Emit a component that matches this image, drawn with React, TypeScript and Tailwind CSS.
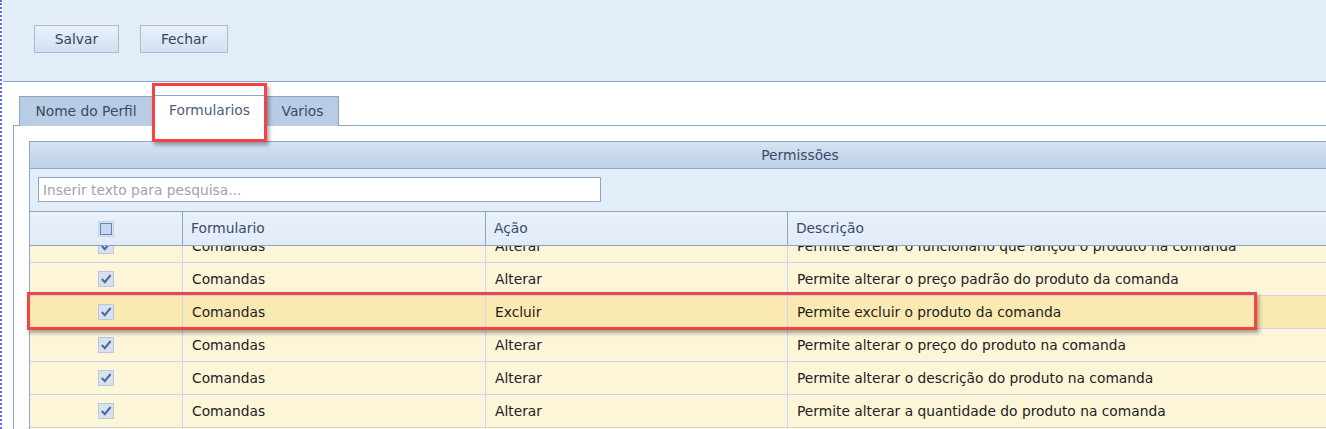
import React from 'react';

const rows = [
  { form: 'Comandas', acao: 'Alterar', desc: 'Permite alterar o funcionario que lançou o produto na comanda' },
  { form: 'Comandas', acao: 'Alterar', desc: 'Permite alterar o preço padrão do produto da comanda' },
  { form: 'Comandas', acao: 'Excluir', desc: 'Permite excluir o produto da comanda', selected: true },
  { form: 'Comandas', acao: 'Alterar', desc: 'Permite alterar o preço do produto na comanda' },
  { form: 'Comandas', acao: 'Alterar', desc: 'Permite alterar o descrição do produto na comanda' },
  { form: 'Comandas', acao: 'Alterar', desc: 'Permite alterar a quantidade do produto na comanda' },
  { form: 'Comandas', acao: 'Alterar', desc: 'Permite alterar o desconto do produto na comanda' },
];

const CheckedBox = () => (
  <div className="w-[16px] h-[16px] border border-[#b9c7da] bg-[#d9e1ec] flex items-center justify-center">
    <svg width="12" height="12" viewBox="0 0 12 12">
      <path d="M1.8 6 L4.8 9.2 L10.6 2" fill="none" stroke="#4b6b9f" strokeWidth="2.1" />
    </svg>
  </div>
);

const EmptyBox = () => (
  <div className="w-[16px] h-[16px] border border-[#c5d3e6] bg-[#d9e4f2] flex items-center justify-center">
    <div className="w-[12px] h-[12px] border border-[#5f82b7] bg-[#c4d7ef]" />
  </div>
);

export default function App() {
  return (
    <div className="relative flex w-[1326px] h-[429px] overflow-hidden bg-white font-['DejaVu_Sans',sans-serif] text-[13.8px]">
      {/* dotted left edge */}
      <div className="w-[3px] shrink-0 border-l-2 border-dotted border-[#5a6fd4]" />

      <div className="flex-1 flex flex-col min-w-0">
        {/* toolbar */}
        <div className="h-[82px] shrink-0 bg-[#e3edf8] border-b border-[#8ea4c8] flex items-start gap-[21px] pt-[25px] pl-[31px]">
          <button className="w-[85px] h-[28px] border border-[#a7bad6] bg-gradient-to-b from-[#eaf1fa] to-[#d3e0f1] text-[#34435e]">
            Salvar
          </button>
          <button className="w-[88px] h-[28px] border border-[#a7bad6] bg-gradient-to-b from-[#eaf1fa] to-[#d3e0f1] text-[#34435e]">
            Fechar
          </button>
        </div>

        {/* tabs + panel */}
        <div className="flex-1 flex flex-col pl-[10px] pt-[13px] min-h-0">
          <div className="relative z-10 flex items-end pl-[6px] h-[31px]">
            <div className="w-[134px] h-[30px] border border-b-0 border-[#8ea4c8] bg-[#b8cce4] text-[#3b4a66] flex items-center justify-center">
              Nome do Perfil
            </div>
            <div className="w-[114px] h-[31px] border border-b-0 border-[#8ea4c8] border-l-0 bg-white text-[#4d5d7a] flex items-center justify-center pb-px">
              Formularios
            </div>
            <div className="w-[72px] h-[30px] border border-b-0 border-l-0 border-[#8ea4c8] bg-[#b8cce4] text-[#3b4a66] flex items-center justify-center">
              Varios
            </div>
          </div>

          <div className="flex-1 -mt-px border-l border-t border-[#8ea4c8] pl-[15px] pt-[15px] min-h-0 flex flex-col">
            <div className="w-[1542px] flex-1 flex flex-col border border-b-0 border-[#8ea4c8] min-h-0">
              <div className="h-[27px] shrink-0 border-b border-[#8ea4c8] bg-gradient-to-b from-[#d6e3f3] to-[#bdd0e8] text-[#3b4a66] flex items-center justify-center">
                Permissões
              </div>
              <div className="h-[43px] shrink-0 border-b border-[#8ea4c8] bg-[#e3edf8] pl-[8px] pt-[8px]">
                <input
                  className="w-[563px] h-[25px] border border-[#8ea4c8] bg-white px-[4px] text-[13.8px] outline-none placeholder:text-[#a3a3a3]"
                  placeholder="Inserir texto para pesquisa..."
                />
              </div>
              <div className="h-[34px] shrink-0 border-b border-[#8ea4c8] bg-gradient-to-b from-[#e9f1fa] to-[#e1ebf7] grid grid-cols-[153px_303px_302px_1fr] text-[#3b4a66]">
                <div className="flex items-center justify-center border-r border-[#8ea4c8]">
                  <EmptyBox />
                </div>
                <div className="flex items-center pl-[8px] border-r border-[#8ea4c8]">Formulario</div>
                <div className="flex items-center pl-[8px] border-r border-[#8ea4c8]">Ação</div>
                <div className="flex items-center pl-[8px]">Descrição</div>
              </div>
              <div className="flex-1 overflow-hidden min-h-0">
                <div className="-mt-[16px]">
                  {rows.map((r, i) => (
                    <div
                      key={i}
                      className={`h-[33px] border-b border-[#c6d6ec] grid grid-cols-[153px_303px_302px_1fr] text-[#222] ${
                        r.selected ? 'bg-[#faeab1]' : 'bg-[#fcf5d8]'
                      }`}
                    >
                      <div className="flex items-center justify-center border-r border-[#cbd9ee]">
                        <CheckedBox />
                      </div>
                      <div className="flex items-center pl-[9px] border-r border-[#cbd9ee]">{r.form}</div>
                      <div className="flex items-center pl-[9px] border-r border-[#cbd9ee]">{r.acao}</div>
                      <div className="flex items-center pl-[9px]">{r.desc}</div>
                    </div>
                  ))}
                </div>
              </div>
            </div>
          </div>
        </div>
      </div>

      {/* red annotation boxes */}
      <div className="absolute left-[152px] top-[83px] w-[115px] h-[59px] border-[3px] border-[#f24444] shadow-[2px_3px_4px_rgba(0,0,0,0.35)] z-20" />
      <div className="absolute left-[27px] top-[292px] w-[1230px] h-[38px] border-[3px] border-[#f24444] shadow-[2px_3px_4px_rgba(0,0,0,0.35)] z-20" />
    </div>
  );
}
